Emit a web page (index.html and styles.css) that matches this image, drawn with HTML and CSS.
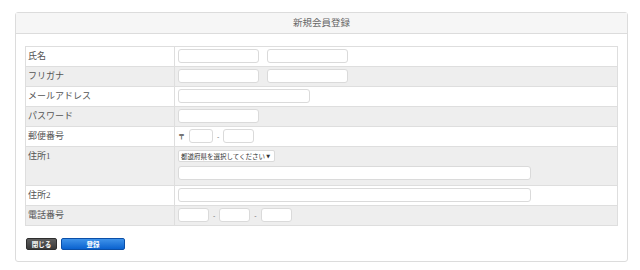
FILE: index.html
```html
<!DOCTYPE html>
<html lang="ja">
<head>
  <meta charset="UTF-8" />
  <title>新規会員登録</title>
  <link rel="stylesheet" href="styles.css">
</head>
<body>
<div class="panel">
  <div class="panel-head">新規会員登録</div>
  <div class="panel-body">
    <table class="form">
      <tr>
        <th>氏名</th>
        <td><div class="fields"><input class="w-short" type="text"><input class="w-short" type="text"></div></td>
      </tr>
      <tr class="alt">
        <th>フリガナ</th>
        <td><div class="fields"><input class="w-short" type="text"><input class="w-short" type="text"></div></td>
      </tr>
      <tr>
        <th>メールアドレス</th>
        <td><div class="fields"><input class="w-mid" type="text"></div></td>
      </tr>
      <tr class="alt">
        <th>パスワード</th>
        <td><div class="fields"><input class="w-short" type="password"></div></td>
      </tr>
      <tr>
        <th>郵便番号</th>
        <td><div class="fields tight"><span class="mark">〒</span><input class="w-zip1" type="text"><span class="dash">-</span><input class="w-zip2" type="text"></div></td>
      </tr>
      <tr class="alt">
        <th>住所1</th>
        <td class="stack">
          <div class="pref"><select><option>都道府県を選択してください</option></select><span class="arrow">▼</span></div>
          <div class="fields"><input class="w-long" type="text"></div>
        </td>
      </tr>
      <tr>
        <th>住所2</th>
        <td><div class="fields"><input class="w-long" type="text"></div></td>
      </tr>
      <tr class="alt">
        <th>電話番号</th>
        <td><div class="fields tight"><input class="w-tel" type="text"><span class="dash">-</span><input class="w-tel" type="text"><span class="dash">-</span><input class="w-tel" type="text"></div></td>
      </tr>
    </table>
    <div class="actions">
      <button class="btn btn-close">閉じる</button>
      <button class="btn btn-submit">登録</button>
    </div>
  </div>
</div>
</body>
</html>
```

FILE: styles.css
```css
  body {
    margin: 0;
    padding: 12px 0 0 15px;
    background-color: #fff;
    font-family: 'Liberation Serif', 'Noto Sans CJK JP', serif;
    color: #555;
  }

  .panel {
    width: 611px;
    border: 1px solid #dcdcdc;
    border-radius: 3px;
  }

  .panel-head {
    height: 20px;
    line-height: 20px;
    background-color: #f6f6f6;
    border-bottom: 1px solid #dcdcdc;
    text-align: center;
    font-size: 9.5px;
    color: #666;
  }

  .panel-body {
    padding: 12px 9px 11px 9px;
  }

  .form {
    width: 100%;
    border-collapse: collapse;
    border: 1px solid #dedede;
  }

  .form tr {
    background-color: #fff;
  }

  .form tr.alt {
    background-color: #eee;
  }

  .form th,
  .form td {
    border-bottom: 1px solid #dedede;
    vertical-align: top;
  }

  .form th {
    width: 143px;
    padding: 3px 3px 0 2px;
    border-right: 1px solid #dedede;
    text-align: left;
    font-weight: normal;
    font-size: 9px;
    line-height: 12px;
  }

  .form td {
    padding: 2px 3px 3px 3px;
  }

  .form td.stack {
    padding: 3px 3px 5px 3px;
  }

  .fields {
    display: flex;
    align-items: center;
    gap: 8px;
  }

  .fields.tight {
    gap: 4px;
  }

  input {
    box-sizing: border-box;
    height: 14px;
    margin: 0;
    padding: 0 3px;
    border: 1px solid #dadada;
    border-radius: 3px;
    background-color: #fff;
    font-size: 8px;
  }

  .w-short { width: 81px; }
  .w-mid { width: 132px; }
  .w-long { width: 353px; }
  .w-zip1 { width: 24px; }
  .w-zip2 { width: 31px; }
  .w-tel { width: 31px; }

  .mark {
    font-family: 'Noto Sans CJK JP', sans-serif;
    font-size: 7px;
    font-weight: bold;
    color: #555;
  }

  .dash {
    font-family: 'Liberation Sans', sans-serif;
    font-size: 7px;
    color: #777;
  }

  .pref {
    display: flex;
    align-items: center;
    box-sizing: border-box;
    width: 97px;
    height: 12px;
    margin-bottom: 4px;
    padding: 0 4px 0 2px;
    border: 1px solid #dadada;
    border-radius: 2px;
    background-color: #fff;
  }

  .pref select {
    flex: 1;
    min-width: 0;
    appearance: none;
    -webkit-appearance: none;
    height: 10px;
    margin: 0;
    padding: 0;
    border: none;
    background: transparent;
    font-family: 'Noto Sans CJK JP', sans-serif;
    font-size: 6.5px;
    line-height: 10px;
    color: #333;
  }

  .pref .arrow {
    font-family: 'DejaVu Sans', sans-serif;
    font-size: 5px;
    color: #333;
  }

  .actions {
    display: flex;
    gap: 4px;
    margin: 12px 0 0 1px;
  }

  .btn {
    height: 12px;
    margin: 0;
    padding: 0;
    border-radius: 2px;
    font-family: 'Noto Sans CJK JP', sans-serif;
    font-size: 6.5px;
    font-weight: bold;
    line-height: 10px;
    color: #fff;
    cursor: pointer;
  }

  .btn-close {
    width: 31px;
    border: 1px solid #2e2e2e;
    background: linear-gradient(#5e5e5e, #3a3a3a);
  }

  .btn-submit {
    width: 64px;
    border: 1px solid #0b4fa8;
    background: linear-gradient(#3f93ea, #0a62cf);
  }
```
